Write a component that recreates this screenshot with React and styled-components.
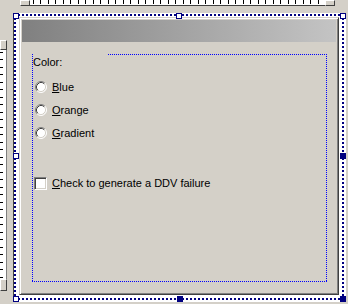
import React from "react";
import styled, { createGlobalStyle } from "styled-components";

const Global = createGlobalStyle`
  html, body { margin: 0; padding: 0; background: #d4d0c8; }
  body { font-family: "Liberation Sans", Arial, sans-serif; font-size: 11px; }
`;

const Editor = styled.div`
  width: 348px;
  height: 304px;
  overflow: hidden;
  display: grid;
  grid-template-columns: 13px 1fr;
  grid-template-rows: 13px 1fr;
  background: #d4d0c8;
`;

const TopRuler = styled.div`
  grid-column: 1 / -1;
  display: flex;
  padding-left: 20px;
  height: 6px;
`;

const RulerButton = styled.div`
  box-sizing: border-box;
  width: ${(p) => p.$w}px;
  height: ${(p) => p.$h}px;
  background: #d4d0c8;
  border-style: solid;
  border-width: 1px;
  border-color: #fff #404040 #404040 #fff;
`;

const HStrip = styled.div`
  box-sizing: border-box;
  width: 295px;
  height: 6px;
  background-color: #fff;
  border-bottom: 1px solid #404040;
  background-image: linear-gradient(90deg, #000 0 1px, transparent 1px 7px, #000 7px 8px, transparent 8px);
  background-size: 15px 4px;
  background-position: 3px 0;
  background-repeat: repeat-x;
`;

const LeftRuler = styled.div`
  grid-column: 1;
  grid-row: 2;
  margin-top: 27px;
  display: flex;
  flex-direction: column;
  width: 7px;
`;

const VStrip = styled.div`
  box-sizing: border-box;
  width: 7px;
  height: 229px;
  background-color: #fff;
  border-right: 1px solid #808080;
  background-image: linear-gradient(180deg, #000 0 1px, transparent 1px 7px, #000 7px 8px, transparent 8px);
  background-size: 3px 15px;
  background-position: 0 2px;
  background-repeat: repeat-y;
`;

const Frame = styled.div`
  grid-column: 2;
  grid-row: 2;
  position: relative;
  width: 333px;
  height: 289px;
  box-sizing: border-box;
  padding: 3px 4px 4px 4px;
  background-color: #fff;
  background-image:
    conic-gradient(at 2px 2px, transparent 75%, #000080 0);
  background-size: 4px 4px;
  background-position: 1px 1px;
  box-shadow: inset 1px 0 0 #404040;
`;

const Inner = styled.div`
  box-sizing: border-box;
  width: 100%;
  height: 100%;
  background: #fff;
  padding: 1px 3px 3px 2px;
`;

const Handle = styled.div`
  position: absolute;
  box-sizing: border-box;
  width: 6px;
  height: 6px;
  left: ${(p) => p.$x}px;
  top: ${(p) => p.$y}px;
  border: 1px solid #000080;
  background: ${(p) => (p.$filled ? "#000080" : "#fff")};
`;

const Dialog = styled.div`
  box-sizing: border-box;
  width: 320px;
  height: 278px;
  background: #d4d0c8;
  border: 1px solid;
  border-color: #d4d0c8 #404040 #404040 #d4d0c8;
  box-shadow: inset 1px 1px 0 #fff, inset -1px -1px 0 #808080;
  padding: 2px;
  display: flex;
  flex-direction: column;
`;

const Caption = styled.div`
  height: 22px;
  flex: none;
  background: linear-gradient(90deg, #808080, #c4c4c4);
`;

const Body = styled.div`
  flex: 1;
  padding: 12px 9px 10px 10px;
  display: flex;
`;

const dots = (dir) =>
  `repeating-linear-gradient(${dir}, #0000ff 0 1px, transparent 1px 2px)`;

const Group = styled.div`
  flex: 1;
  box-sizing: border-box;
  padding: 2px 0 0 1px;
  background-image: ${dots("90deg")}, ${dots("180deg")}, ${dots("180deg")}, ${dots("90deg")};
  background-repeat: no-repeat;
  background-position: 76px 0, 0 0, right 0 top 0, 0 bottom;
  background-size: calc(100% - 76px) 1px, 1px 100%, 1px 100%, 100% 1px;
  display: flex;
  flex-direction: column;
  color: #000;
  font-size: 11px;
  line-height: 13px;
`;

const Label = styled.div`
  height: 13px;
`;

const Options = styled.div`
  margin-top: 10px;
  display: flex;
  flex-direction: column;
  gap: 7px;
`;

const Row = styled.div`
  display: flex;
  align-items: center;
  height: 16px;
  padding-left: ${(p) => p.$pad}px;
  gap: ${(p) => p.$gap}px;
  margin-top: ${(p) => p.$mt || 0}px;
`;

const CheckBox = styled.div`
  box-sizing: border-box;
  width: 13px;
  height: 13px;
  background: #fff;
  border: 1px solid;
  border-color: #808080 #fff #fff #808080;
  box-shadow: inset 1px 1px 0 #404040, inset -1px -1px 0 #d4d0c8;
`;

const Radio = () => (
  <svg width="12" height="12" viewBox="0 0 12 12">
    <circle cx="6" cy="6" r="5" fill="#fff" />
    <path d="M2.11 9.89 A5.5 5.5 0 0 1 9.89 2.11" fill="none" stroke="#808080" strokeWidth="1" />
    <path d="M9.89 2.11 A5.5 5.5 0 0 1 2.11 9.89" fill="none" stroke="#fff" strokeWidth="1" />
    <path d="M2.82 9.18 A4.5 4.5 0 0 1 9.18 2.82" fill="none" stroke="#404040" strokeWidth="1" />
    <path d="M9.18 2.82 A4.5 4.5 0 0 1 2.82 9.18" fill="none" stroke="#d4d0c8" strokeWidth="1" />
  </svg>
);

export default function App() {
  return (
    <>
      <Global />
      <Editor>
        <TopRuler>
          <RulerButton $w={10} $h={6} />
          <HStrip />
          <RulerButton $w={10} $h={6} />
        </TopRuler>
        <LeftRuler>
          <RulerButton $w={7} $h={10} />
          <VStrip />
          <RulerButton $w={7} $h={12} />
        </LeftRuler>
        <Frame>
          <Inner>
            <Dialog>
              <Caption />
              <Body>
                <Group>
                  <Label>Color:</Label>
                  <Options>
                    <Row $pad={2} $gap={5}>
                      <Radio />
                      <span><u>B</u>lue</span>
                    </Row>
                    <Row $pad={2} $gap={5}>
                      <Radio />
                      <span><u>O</u>range</span>
                    </Row>
                    <Row $pad={2} $gap={5}>
                      <Radio />
                      <span><u>G</u>radient</span>
                    </Row>
                    <Row $pad={1} $gap={5} $mt={27}>
                      <CheckBox />
                      <span><u>C</u>heck to generate a DDV failure</span>
                    </Row>
                  </Options>
                </Group>
              </Body>
            </Dialog>
          </Inner>
          <Handle $x={0} $y={0} />
          <Handle $x={163} $y={0} />
          <Handle $x={327} $y={0} />
          <Handle $x={0} $y={140} />
          <Handle $x={327} $y={140} $filled />
          <Handle $x={0} $y={283} />
          <Handle $x={164} $y={283} $filled />
          <Handle $x={327} $y={283} $filled />
        </Frame>
      </Editor>
    </>
  );
}
